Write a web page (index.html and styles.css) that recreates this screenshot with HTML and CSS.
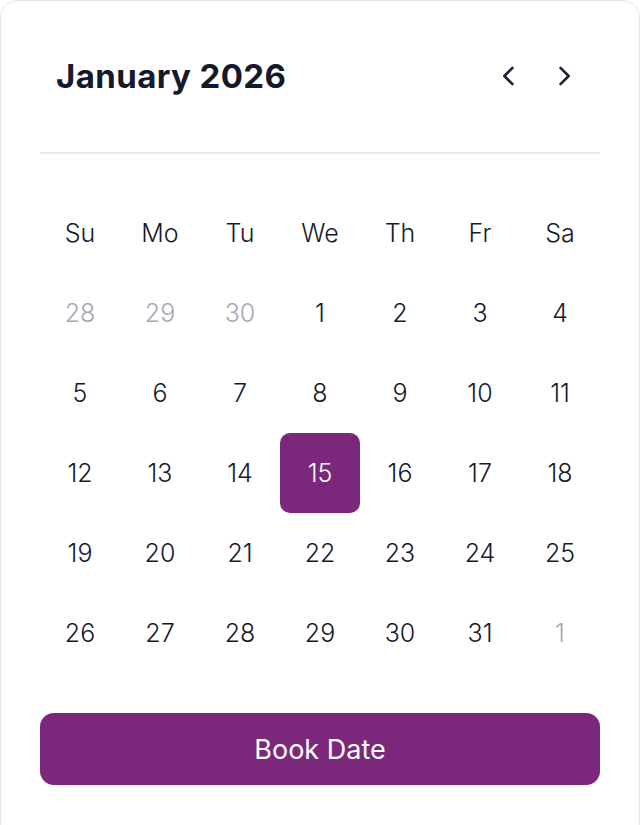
FILE: index.html
```html
<!DOCTYPE html>
<html lang="en">
<head>
    <meta charset="utf-8">
    <title>Book Date</title>
    <link rel="stylesheet" href="styles.css">
</head>
<body>
    <div class="card">
        <div class="header">
            <h1 class="month">January 2026</h1>
            <div class="nav">
                <button class="navBtn" aria-label="Previous month">
                    <svg width="28" height="28" viewBox="0 0 24 24" fill="none" stroke="currentColor" stroke-width="2.2" stroke-linecap="round" stroke-linejoin="round"><path d="M15 5l-7 7 7 7"/></svg>
                </button>
                <button class="navBtn" aria-label="Next month">
                    <svg width="28" height="28" viewBox="0 0 24 24" fill="none" stroke="currentColor" stroke-width="2.2" stroke-linecap="round" stroke-linejoin="round"><path d="M9 5l7 7-7 7"/></svg>
                </button>
            </div>
        </div>

        <div class="divider"></div>

        <div class="grid">
            <div class="dayName">Su</div>
            <div class="dayName">Mo</div>
            <div class="dayName">Tu</div>
            <div class="dayName">We</div>
            <div class="dayName">Th</div>
            <div class="dayName">Fr</div>
            <div class="dayName">Sa</div>

            <div class="day muted">28</div>
            <div class="day muted">29</div>
            <div class="day muted">30</div>
            <div class="day">1</div>
            <div class="day">2</div>
            <div class="day">3</div>
            <div class="day">4</div>

            <div class="day">5</div>
            <div class="day">6</div>
            <div class="day">7</div>
            <div class="day">8</div>
            <div class="day">9</div>
            <div class="day">10</div>
            <div class="day">11</div>

            <div class="day">12</div>
            <div class="day">13</div>
            <div class="day">14</div>
            <div class="day selected">15</div>
            <div class="day">16</div>
            <div class="day">17</div>
            <div class="day">18</div>

            <div class="day">19</div>
            <div class="day">20</div>
            <div class="day">21</div>
            <div class="day">22</div>
            <div class="day">23</div>
            <div class="day">24</div>
            <div class="day">25</div>

            <div class="day">26</div>
            <div class="day">27</div>
            <div class="day">28</div>
            <div class="day">29</div>
            <div class="day">30</div>
            <div class="day">31</div>
            <div class="day muted">1</div>
        </div>

        <button class="bookBtn">Book Date</button>
    </div>
</body>
</html>
```

FILE: styles.css
```css
body
    {
        margin:           0;
        background-color: #fff;
        font-family:      Inter, "Noto Sans", sans-serif;
    }

.card
    {
        box-sizing:       border-box;
        width:            640px;
        min-height:       840px;
        padding:          39px;
        border:           1px solid #e4e4ea;
        border-radius:    18px;
        background-color: #fff;
    }

.header
    {
        display:          flex;
        align-items:      center;
        justify-content:  space-between;
        height:           72px;
        padding-left:     16px;
    }

.month
    {
        margin:           0;
        font-size:        33px;
        font-weight:      700;
        color:            #141a2b;
        letter-spacing:   0.4px;
    }

.nav
    {
        display:          flex;
        gap:              27px;
        margin-right:     22px;
    }

.navBtn
    {
        display:          flex;
        padding:          0;
        border:           none;
        background:       none;
        color:            #1c2233;
    }

.divider
    {
        height:           2px;
        margin-top:       40px;
        background-color: #e8e8ee;
    }

.grid
    {
        display:          grid;
        grid-template-columns: repeat(7, 80px);
        grid-auto-rows:   80px;
        margin-top:       39px;
    }

.dayName,
.day
    {
        display:          flex;
        align-items:      center;
        justify-content:  center;
        font-size:        25px;
        font-weight:      300;
        color:            #151a2b;
    }

.day.muted
    {
        color:            #a9a5b8;
    }

.day.selected
    {
        border-radius:    10px;
        background-color: #7b287c;
        color:            #fff;
    }

.bookBtn
    {
        display:          block;
        width:            100%;
        height:           72px;
        margin-top:       40px;
        border:           none;
        border-radius:    14px;
        background-color: #7b287c;
        color:            #fff;
        font-family:      Inter, "Noto Sans", sans-serif;
        font-size:        27px;
        font-weight:      400;
    }
```
